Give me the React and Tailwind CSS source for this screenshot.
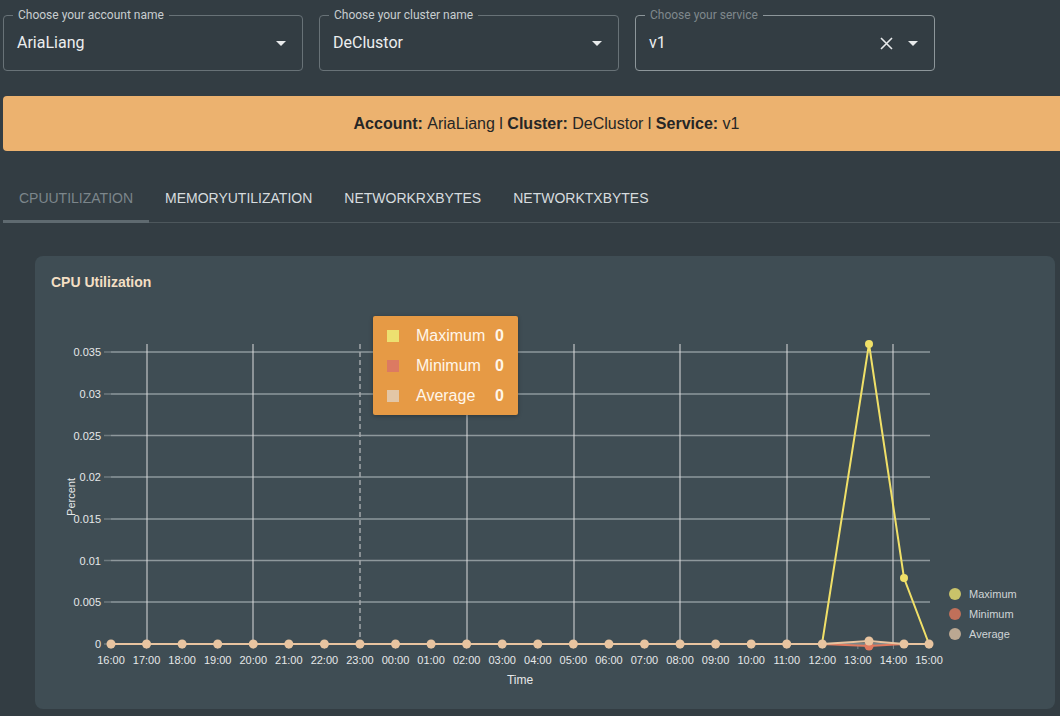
import React from "react";

const hours = ["16:00","17:00","18:00","19:00","20:00","21:00","22:00","23:00","00:00","01:00","02:00","03:00","04:00","05:00","06:00","07:00","08:00","09:00","10:00","11:00","12:00","13:00","14:00","15:00"];
const X0 = 111;
const STEP = 818 / 23;
const yTicks = [["0.035",352],["0.03",394],["0.025",435.5],["0.02",477],["0.015",519],["0.01",560.5],["0.005",602],["0",644]];
const vLines = [147, 253, 467, 574, 680, 787, 893];

function Caret() {
  return (
    <svg width="10" height="5" viewBox="0 0 10 5"><path d="M0 0 L10 0 L5 5 Z" fill="#e8eaeb" /></svg>
  );
}

function SelectBox({ label, value, dim, clear }) {
  return (
    <div className={`relative w-[300px] h-[56px] rounded-[4px] border ${dim ? "border-[#8d969a]" : "border-[#687277]"} flex items-center pl-[13px] pr-[16px]`}>
      <span className={`absolute left-[9px] top-[-9px] px-[5px] bg-[#333d43] text-[12px] leading-[16px] ${dim ? "text-[#7f888c]" : "text-[#c8cdd0]"}`}>{label}</span>
      <span className="flex-1 text-[16px] text-[#eceeef]">{value}</span>
      {clear && (
        <svg className="mr-[15px]" width="13" height="13" viewBox="0 0 13 13"><path d="M1 1 L12 12 M12 1 L1 12" stroke="#e8eaeb" strokeWidth="1.6" /></svg>
      )}
      <Caret />
    </div>
  );
}

export default function App() {
  const ptsMax = [[822,644],[869,344],[904,578],[929,644]];
  const ptsMin = [[822,644],[869,646],[904,644],[929,644]];
  const ptsAvg = [[822,644],[869,641],[904,644],[929,644]];
  const toPath = (p) => p.map((q, i) => `${i ? "L" : "M"}${q[0]} ${q[1]}`).join(" ");
  return (
    <div className="min-h-[716px] bg-[#333d43] pl-[3px] pt-[15px] font-['Roboto',sans-serif] overflow-hidden">
      <div className="flex gap-[16px]">
        <SelectBox label="Choose your account name" value="AriaLiang" />
        <SelectBox label="Choose your cluster name" value="DeClustor" />
        <SelectBox label="Choose your service" value="v1" dim clear />
      </div>

      <div className="mt-[25px] h-[55px] rounded-l-[4px] bg-[#ecb26f] flex items-center justify-center font-['Liberation_Sans',sans-serif] text-[16px] text-[#262626] pl-[30px]">
        <b>Account:</b>&nbsp;AriaLiang l&nbsp;<b>Cluster:</b>&nbsp;DeClustor l&nbsp;<b>Service:</b>&nbsp;v1
      </div>

      <div className="mt-[24px] h-[48px] border-b border-[#4d575c] flex font-['Liberation_Sans',sans-serif] text-[14px]">
        <div className="relative w-[146px] flex items-center justify-center text-[#7c868b]">
          CPUUTILIZATION
          <div className="absolute left-0 right-0 bottom-[-1px] h-[3px] bg-[#5f6a70]" />
        </div>
        <div className="px-[16px] flex items-center text-[#d7dcdf]">MEMORYUTILIZATION</div>
        <div className="px-[16px] flex items-center text-[#d7dcdf]">NETWORKRXBYTES</div>
        <div className="px-[16px] flex items-center text-[#d7dcdf]">NETWORKTXBYTES</div>
      </div>

      <div className="relative mt-[33px] ml-[32px] w-[1020px] h-[453px] rounded-[8px] bg-[#3f4d54] font-['Liberation_Sans',sans-serif]">
        <div className="pl-[16px] pt-[16px] h-[36px] text-[14px] leading-[20px] font-bold text-[#f3dfc4]">CPU Utilization</div>
        <svg width="1020" height="417" viewBox="35 292 1020 417" className="block">
          {yTicks.map(([t, y]) => (
            <g key={t}>
              <line x1="104" x2="111" y1={y} y2={y} stroke="#6f7a7f" strokeWidth="1.5" />
              <line x1="111" x2="930" y1={y} y2={y} stroke="#8e989c" strokeWidth="1.5" />
              <text x="101" y={y + 4} textAnchor="end" fontSize="11" fill="#e6e8e9">{t}</text>
            </g>
          ))}
          {vLines.map((x) => (
            <line key={x} x1={x} x2={x} y1="344" y2="644" stroke="#dcdcdc" strokeWidth="1" />
          ))}
          <line x1="360" x2="360" y1="344" y2="644" stroke="#a3a7a9" strokeWidth="1.5" strokeDasharray="5 3" />
          {hours.map((h, i) => (
            <g key={h}>
              <line x1={X0 + i * STEP} x2={X0 + i * STEP} y1="644" y2="649" stroke="#7c868b" strokeWidth="1" />
              <text x={X0 + i * STEP} y="664" textAnchor="middle" fontSize="11" fill="#e6e8e9">{h}</text>
            </g>
          ))}
          <text x="0" y="0" fontSize="11" fill="#e6e8e9" textAnchor="middle" transform="translate(75 497) rotate(-90)">Percent</text>
          <text x="520" y="684" fontSize="12" fill="#e6e8e9" textAnchor="middle">Time</text>

          <line x1="111" x2="822" y1="644" y2="644" stroke="#e8c4a0" strokeWidth="2" />
          <path d={toPath(ptsMin)} stroke="#e07a5f" strokeWidth="2" fill="none" />
          <path d={toPath(ptsAvg)} stroke="#e8c4a0" strokeWidth="2" fill="none" />
          <path d={toPath(ptsMax)} stroke="#f0e068" strokeWidth="2" fill="none" />
          <circle cx="869" cy="344" r="4" fill="#f0e068" />
          <circle cx="904" cy="578" r="4" fill="#f0e068" />
          <circle cx="869" cy="646" r="4.5" fill="#e07a5f" />
          {hours.slice(0, 21).map((h, i) => (
            <circle key={h} cx={X0 + i * STEP} cy="644" r="4.5" fill="#e8c4a0" />
          ))}
          <circle cx="869" cy="641" r="4.5" fill="#e8c4a0" />
          <circle cx="904" cy="644" r="4.5" fill="#e8c4a0" />
          <circle cx="929" cy="644" r="4.5" fill="#e8c4a0" />

          {[["Maximum", "#c9c36a", 594], ["Minimum", "#c0705a", 614], ["Average", "#bba892", 634]].map(([n, c, y]) => (
            <g key={n}>
              <circle cx="955" cy={y} r="6" fill={c} />
              <text x="969" y={y + 4} fontSize="11" fill="#cfd4d6">{n}</text>
            </g>
          ))}
        </svg>

        <div className="absolute left-[338px] top-[60px] w-[145px] h-[99px] rounded-[2px] bg-[#e69a45] shadow-[0_1px_4px_rgba(0,0,0,0.3)] pl-[14px] pr-[14px] pt-[10px] flex flex-col gap-[10px] text-[16px] text-[#fff6ea]">
          {[["Maximum", "#ede070"], ["Minimum", "#dc7a62"], ["Average", "#e3c6a6"]].map(([n, c]) => (
            <div key={n} className="flex items-center h-[20px]">
              <div className="w-[12px] h-[12px] mr-[17px]" style={{ backgroundColor: c }} />
              <span className="flex-1">{n}</span>
              <span className="font-bold">0</span>
            </div>
          ))}
        </div>
      </div>
    </div>
  );
}
